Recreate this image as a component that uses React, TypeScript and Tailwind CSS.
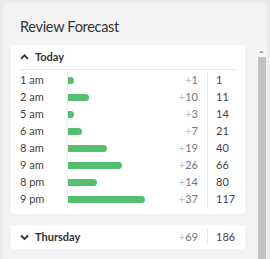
import React from "react";

const rows = [
  { t: "1 am", d: 1, c: 1 },
  { t: "2 am", d: 10, c: 11 },
  { t: "5 am", d: 3, c: 14 },
  { t: "6 am", d: 7, c: 21 },
  { t: "8 am", d: 19, c: 40 },
  { t: "9 am", d: 26, c: 66 },
  { t: "8 pm", d: 14, c: 80 },
  { t: "9 pm", d: 37, c: 117 },
];

function Up() {
  return (
    <svg width="9" height="10" viewBox="0 0 9 10" className="mr-[6px]">
      <path d="M1 6.8 L4.5 3.3 L8 6.8" fill="none" stroke="#333" strokeWidth="1.8" />
    </svg>
  );
}
function Down() {
  return (
    <svg width="9" height="10" viewBox="0 0 9 10" className="mr-[6px]">
      <path d="M1 3.5 L4.5 7 L8 3.5" fill="none" stroke="#333" strokeWidth="1.8" />
    </svg>
  );
}

export default function App() {
  return (
    <div
      className="w-[270px] h-[259px] bg-[#ebebeb] p-[3px] overflow-hidden"
      style={{ fontFamily: 'Lato, "Open Sans", sans-serif' }}
    >
      <div className="h-[262px] bg-[#f3f3f3] rounded-[4px] flex flex-col">
        <div className="pl-[17px] pt-[14px] h-[42px] text-[14.5px] leading-[20px] text-[#333] tracking-[-0.3px]">
          Review Forecast
        </div>
        <div className="flex flex-1">
          <div className="ml-[8px] w-[234px] flex flex-col gap-[11px]">
            <div className="bg-white rounded-[3px] pl-[9px] pr-[8px] pb-[6px]">
              <div className="h-[25px] flex items-center border-b border-[#e6e6e6] text-[11px] font-bold text-[#333]">
                <Up />
                Today
              </div>
              <div className="pt-[2px]">
                {rows.map((r) => (
                  <div key={r.t} className="flex h-[17px] items-center text-[11px] text-[#444]">
                    <div className="w-[48px] h-full flex items-center border-r border-[#eeeeee]">{r.t}</div>
                    <div className="flex-1 h-full flex items-center">
                      <div
                        className="h-[7px] bg-[#52c06f] rounded-r-full"
                        style={{ width: Math.max(6, Math.round(r.d * 2.07)) }}
                      />
                    </div>
                    <div className="w-[40px] text-right pr-[9px] text-[#777]">
                      <span className="text-[#c4c4c4]">+</span>
                      {r.d}
                    </div>
                    <div className="w-[30px] h-full flex items-center pl-[8px] border-l border-[#e6e6e6]">{r.c}</div>
                  </div>
                ))}
              </div>
            </div>
            <div className="bg-white rounded-[3px] pl-[9px] pr-[8px] h-[24px] flex items-center text-[11px]">
              <div className="flex items-center font-bold text-[#333] flex-1">
                <Down />
                Thursday
              </div>
              <div className="w-[40px] text-right pr-[9px] text-[#777]">
                <span className="text-[#c4c4c4]">+</span>69
              </div>
              <div className="w-[30px] h-[16px] flex items-center pl-[8px] border-l border-[#e6e6e6] text-[#444]">186</div>
            </div>
          </div>
          <div className="ml-[12px] mt-[2px] w-[9px] bg-[#f7f7f7] flex flex-col items-center">
            <svg width="9" height="10" viewBox="0 0 9 10">
              <path d="M2 6 L4.5 3.5 L7 6 Z" fill="#a3a3a3" />
            </svg>
            <div className="w-[8px] flex-1 bg-[#c1c1c1]" />
          </div>
        </div>
      </div>
    </div>
  );
}
